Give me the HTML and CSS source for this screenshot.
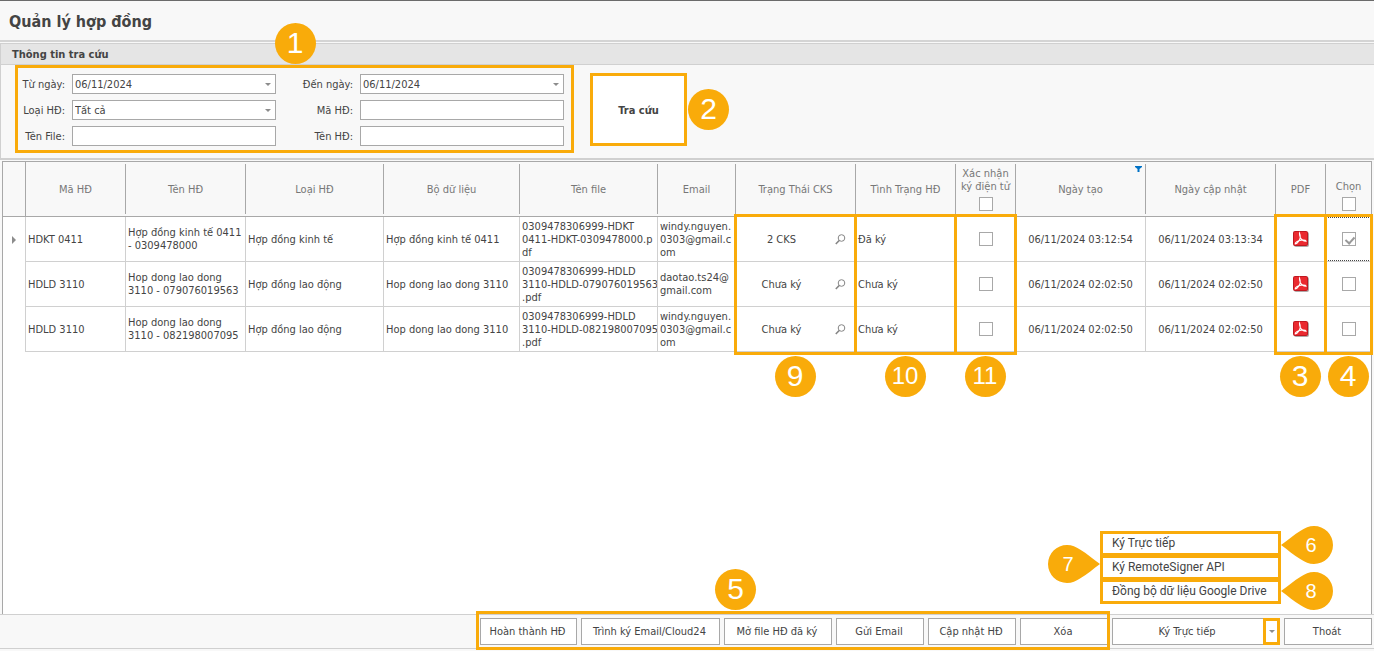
FILE: index.html
```html
<!DOCTYPE html>
<html lang="vi">
<head>
    <meta charset="UTF-8">
    <meta name="viewport" content="width=device-width, initial-scale=1.0">
    <title>Quản lý hợp đồng</title>
    <link rel="stylesheet" href="styles.css">
</head>
<body>
    <svg class="sprite" aria-hidden="true">
        <symbol id="pdf" viewBox="0 0 16 16">
            <rect x="1" y="1" width="15" height="15" rx="2" fill="#b0a8a8"/>
            <rect x="0" y="0" width="15" height="15" rx="2" fill="#c01820"/>
            <rect x="1" y="1" width="13" height="13" rx="1" fill="#ea2a30"/>
            <path d="M6.500 2.200C7.800 5 7.400 8 5.500 10.500 4.500 12 3.200 13 2.200 12.800c.3-1.700 3-3.200 6-3.600 2.500-.3 4.600 0 4.900.9C11 10.200 8.500 8.800 7.300 6.500 6.700 5 6.300 3.500 6.500 2.200z" fill="none" stroke="#fff" stroke-width="1.100"/>
        </symbol>
        <symbol id="lens" viewBox="0 0 11 11">
            <circle cx="6.500" cy="4" r="3.300" fill="none" stroke="#858585" stroke-width="1"/>
            <path d="M4.200 6.500L.8 10" stroke="#858585" stroke-width="1.600"/>
        </symbol>
        <symbol id="drop" viewBox="0 0 52 38">
            <path d="M0 19C7 14 13 8.500 20 4.500 24 2 28 0 33 0a19 19 0 0 1 0 38c-5 0-9-2-13-4.500C13 29.500 7 24 0 19z" fill="#f9ab0a"/>
        </symbol>
    </svg>

    <header class="title-bar">
        <h1>Quản lý hợp đồng</h1>
    </header>

    <section class="search-panel">
        <h2>Thông tin tra cứu</h2>
        <form class="search-body">
            <div class="filters">
                <label for="fromDate">Từ ngày:</label>
                <div class="combo"><select id="fromDate"><option>06/11/2024</option></select></div>
                <label for="toDate">Đến ngày:</label>
                <div class="combo"><select id="toDate"><option>06/11/2024</option></select></div>
                <label for="type">Loại HĐ:</label>
                <div class="combo"><select id="type"><option>Tất cả</option></select></div>
                <label for="code">Mã HĐ:</label>
                <input type="text" id="code">
                <label for="file">Tên File:</label>
                <input type="text" id="file">
                <label for="name">Tên HĐ:</label>
                <input type="text" id="name">
                <span class="badge badge-filters">1</span>
            </div>
            <button type="button" class="search-button">Tra cứu</button>
            <span class="badge">2</span>
        </form>
    </section>

    <main class="grid">
        <table>
            <colgroup>
                <col style="width:22px"><col style="width:100px"><col style="width:120px"><col style="width:138px">
                <col style="width:136px"><col style="width:138px"><col style="width:78px"><col style="width:120px">
                <col style="width:100px"><col style="width:60px"><col style="width:130px"><col style="width:130px">
                <col style="width:50px"><col style="width:46px">
            </colgroup>
            <thead>
                <tr>
                    <th></th>
                    <th>Mã HĐ</th>
                    <th>Tên HĐ</th>
                    <th>Loại HĐ</th>
                    <th>Bộ dữ liệu</th>
                    <th>Tên file</th>
                    <th>Email</th>
                    <th>Trạng Thái CKS</th>
                    <th>Tình Trạng HĐ</th>
                    <th class="with-check"><label for="allSign">Xác nhận<br>ký điện tử</label><input type="checkbox" id="allSign"></th>
                    <th>Ngày tạo
                        <svg class="filter-icon" width="7" height="6" viewBox="0 0 7 6"><path d="M0 0h7v1L4.500 3v3h-2V3L0 1z" fill="#0072c6"/></svg>
                    </th>
                    <th>Ngày cập nhật</th>
                    <th>PDF</th>
                    <th class="with-check"><label for="allPick">Chọn</label><input type="checkbox" id="allPick"></th>
                </tr>
            </thead>
            <tbody>
                <tr>
                    <td><span class="row-arrow"></span></td>
                    <td>HDKT 0411</td>
                    <td>Hợp đồng kinh tế 0411<br>- 0309478000</td>
                    <td>Hợp đồng kinh tế</td>
                    <td>Hợp đồng kinh tế 0411</td>
                    <td>0309478306999-HDKT<br>0411-HDKT-0309478000.p<br>df</td>
                    <td>windy.nguyen.<br>0303@gmail.c<br>om</td>
                    <td><div class="lookup"><span>2 CKS</span><svg width="11" height="11"><use href="#lens"/></svg></div><div class="mark"><span class="badge">9</span></div></td>
                    <td>Đã ký<div class="mark"><span class="badge small">10</span></div></td>
                    <td class="center"><input type="checkbox" aria-label="Xác nhận ký điện tử"><div class="mark"><span class="badge small">11</span></div></td>
                    <td class="center">06/11/2024 03:12:54</td>
                    <td class="center">06/11/2024 03:13:34</td>
                    <td class="center"><svg class="pdf" width="16" height="16"><use href="#pdf"/></svg><div class="mark"><span class="badge">3</span></div></td>
                    <td class="center focused"><input type="checkbox" aria-label="Chọn" checked><div class="mark"><span class="badge">4</span></div></td>
                </tr>
                <tr>
                    <td></td>
                    <td>HDLD 3110</td>
                    <td>Hop dong lao dong<br>3110 - 079076019563</td>
                    <td>Hợp đồng lao động</td>
                    <td>Hop dong lao dong 3110</td>
                    <td>0309478306999-HDLD<br>3110-HDLD-079076019563<br>.pdf</td>
                    <td>daotao.ts24@<br>gmail.com</td>
                    <td><div class="lookup"><span>Chưa ký</span><svg width="11" height="11"><use href="#lens"/></svg></div></td>
                    <td>Chưa ký</td>
                    <td class="center"><input type="checkbox" aria-label="Xác nhận ký điện tử"></td>
                    <td class="center">06/11/2024 02:02:50</td>
                    <td class="center">06/11/2024 02:02:50</td>
                    <td class="center"><svg class="pdf" width="16" height="16"><use href="#pdf"/></svg></td>
                    <td class="center"><input type="checkbox" aria-label="Chọn"></td>
                </tr>
                <tr>
                    <td></td>
                    <td>HDLD 3110</td>
                    <td>Hop dong lao dong<br>3110 - 082198007095</td>
                    <td>Hợp đồng lao động</td>
                    <td>Hop dong lao dong 3110</td>
                    <td>0309478306999-HDLD<br>3110-HDLD-082198007095<br>.pdf</td>
                    <td>windy.nguyen.<br>0303@gmail.c<br>om</td>
                    <td><div class="lookup"><span>Chưa ký</span><svg width="11" height="11"><use href="#lens"/></svg></div></td>
                    <td>Chưa ký</td>
                    <td class="center"><input type="checkbox" aria-label="Xác nhận ký điện tử"></td>
                    <td class="center">06/11/2024 02:02:50</td>
                    <td class="center">06/11/2024 02:02:50</td>
                    <td class="center"><svg class="pdf" width="16" height="16"><use href="#pdf"/></svg></td>
                    <td class="center"><input type="checkbox" aria-label="Chọn"></td>
                </tr>
            </tbody>
        </table>
    </main>

    <footer class="actions">
        <div class="action-group">
            <button type="button" class="w-97">Hoàn thành HĐ</button>
            <button type="button" class="w-139">Trình ký Email/Cloud24</button>
            <button type="button" class="w-108">Mở file HĐ đã ký</button>
            <button type="button">Gửi Email</button>
            <button type="button">Cập nhật HĐ</button>
            <button type="button">Xóa</button>
            <span class="badge badge-actions">5</span>
        </div>
        <div class="split">
            <button type="button" class="split-main">Ký Trực tiếp</button>
            <button type="button" class="split-arrow" aria-label="Chọn cách ký"></button>
            <div class="sign-menu">
                <button type="button">Ký Trực tiếp</button>
                <button type="button">Ký RemoteSigner API</button>
                <button type="button">Đồng bộ dữ liệu Google Drive</button>
                <span class="drop drop-6"><svg width="52" height="38"><use href="#drop"/></svg><b>6</b></span>
                <span class="drop drop-7"><svg width="52" height="38"><use href="#drop"/></svg><b>7</b></span>
                <span class="drop drop-8"><svg width="52" height="38"><use href="#drop"/></svg><b>8</b></span>
            </div>
        </div>
        <button type="button">Thoát</button>
    </footer>
</body>
</html>
```
FILE: styles.css
```css
* {
    box-sizing: border-box;
}
body {
    display: flex;
    flex-direction: column;
    min-height: 100vh;
    margin: 0;
    border-top: 1px solid #6b6b6b;
    background-color: #f8f8f8;
    color: #444;
    font-family: "DejaVu Sans Condensed", Tahoma, sans-serif;
    font-size: 11px;
    line-height: 13px;
}
button, input, select {
    margin: 0;
    font: inherit;
    color: inherit;
}
.sprite {
    position: absolute;
    width: 0;
    height: 0;
}

/* title and search panel */
.title-bar {
    height: 41px;
    padding: 11px 9px 0;
    border-bottom: 2px solid #d4d4d4;
}
h1 {
    margin: 0;
    font-size: 16px;
    line-height: 20px;
}
.search-panel {
    margin-top: 1px;
    border: 1px solid #d0d0d0;
    border-width: 1px 0 2px 1px;
}
h2 {
    margin: 0;
    height: 21px;
    padding: 0 11px;
    border-bottom: 1px solid #d0d0d0;
    background-color: #e5e5e5;
    font-size: 11px;
    line-height: 21px;
}
.search-body {
    display: flex;
    align-items: center;
    height: 93px;
    padding: 0 14px 5px;
}
.filters {
    position: relative;
    display: grid;
    grid-template-columns: 47px 204px 70px 204px;
    gap: 6px 7px;
    padding: 6px 7px 4px 0;
    border: 3px solid #f9ab0a;
}
.filters label {
    display: flex;
    justify-content: flex-end;
    align-items: center;
    white-space: nowrap;
}
.filters input, .combo select {
    display: block;
    width: 100%;
    height: 20px;
    padding: 0 2px;
    border: 1px solid #a8a8a8;
    border-radius: 0;
    background-color: white;
    appearance: none;
}
.combo {
    position: relative;
}
.combo::after {
    content: "";
    position: absolute;
    right: 5px;
    top: 9px;
    border: 3px solid transparent;
    border-top-color: #8c8c8c;
    border-bottom: none;
}
.search-button {
    width: 97px;
    height: 73px;
    margin: 0 1px 0 16px;
    padding: 3px 0 0;
    border: 3px solid #f9ab0a;
    background-color: white;
    font-weight: bold;
}

/* numbered callouts */
.badge {
    width: 41px;
    height: 41px;
    border-radius: 50%;
    background-color: #f9ab0a;
    color: white;
    font-family: "Liberation Sans", Arial, sans-serif;
    font-size: 30px;
    line-height: 40px;
    text-align: center;
}
.badge.small {
    font-size: 24px;
}
.badge-filters {
    position: absolute;
    left: 50%;
    top: -45px;
    margin-left: -20px;
}
.mark {
    position: absolute;
    z-index: 1;
    left: -2px;
    right: -2px;
    top: -3px;
    height: 141px;
    border: 3px solid #f9ab0a;
    pointer-events: none;
}
.mark .badge {
    position: absolute;
    left: 50%;
    top: 139px;
    margin-left: -21px;
}

/* contract grid */
.grid {
    flex: 1;
    margin: 1px 2px 0;
    border: 1px solid #a8a8a8;
    border-bottom: none;
    background-color: white;
}
table {
    width: 100%;
    table-layout: fixed;
    border-spacing: 0;
}
th {
    position: relative;
    height: 55px;
    padding: 0 0 0 1px;
    border-bottom: 1px solid #a8a8a8;
    background-color: #f8f8f8;
    color: #777;
    font-weight: normal;
}
th + th::before {
    content: "";
    position: absolute;
    left: 0;
    top: 2px;
    bottom: 2px;
    border-left: 1px solid #a8a8a8;
}
th:nth-child(2)::before {
    top: 0;
    bottom: 0;
}
.with-check {
    padding-bottom: 5px;
    vertical-align: bottom;
}
.with-check input {
    margin: 4px auto 0;
}
.filter-icon {
    position: absolute;
    right: 3px;
    top: 4px;
}
td {
    position: relative;
    height: 45px;
    padding: 0 0 0 2px;
    border-left: 1px solid #d0d0d0;
    border-bottom: 1px solid #d0d0d0;
    white-space: nowrap;
}
td:first-child {
    padding: 0;
    border: none;
}
td.center {
    padding: 0;
    text-align: center;
}
.focused::before {
    content: "";
    position: absolute;
    inset: 0;
    border: 1px dotted #444;
}
.row-arrow {
    display: block;
    width: 4px;
    margin-left: 9px;
    border: 4px solid transparent;
    border-left-color: #8c8c8c;
    border-right: none;
}
.lookup {
    display: flex;
    align-items: center;
    padding-right: 9px;
}
.lookup span {
    flex: 1;
    padding-right: 10px;
    text-align: center;
}
.pdf {
    display: block;
    margin: 0 auto;
}
input[type="checkbox"] {
    display: block;
    position: relative;
    width: 14px;
    height: 14px;
    margin-left: auto;
    margin-right: auto;
    border: 1px solid #a8a8a8;
    background-color: white;
    appearance: none;
}
input[type="checkbox"]:checked::after {
    content: "";
    position: absolute;
    left: 4px;
    top: 2px;
    width: 4px;
    height: 7px;
    border: solid #999;
    border-width: 0 2px 2px 0;
    transform: rotate(42deg);
}

/* bottom buttons */
.actions {
    display: flex;
    justify-content: flex-end;
    gap: 4px;
    margin-bottom: 2px;
    padding: 3px 2px;
    border-top: 1px solid #d0d0d0;
    border-bottom: 1px solid #d0d0d0;
}
.actions button {
    width: 88px;
    height: 27px;
    padding: 0 2px 0 0;
    border: 1px solid #a8a8a8;
    background-color: white;
    white-space: nowrap;
}
.action-group {
    position: relative;
    display: flex;
    gap: 4px;
}
.action-group::before {
    content: "";
    position: absolute;
    inset: -7px -2px -5px -4px;
    border: 3px solid #f9ab0a;
    pointer-events: none;
}
.actions .w-97 {
    width: 97px;
}
.actions .w-139 {
    width: 139px;
}
.actions .w-108 {
    width: 108px;
}
.badge-actions {
    position: absolute;
    left: 235px;
    top: -49px;
}
.split {
    position: relative;
    display: flex;
}
.actions .split-main {
    width: 151px;
    border-right: none;
}
.actions .split-arrow {
    display: flex;
    align-items: center;
    justify-content: center;
    width: 17px;
    padding: 0;
    border: 3px solid #f9ab0a;
}
.split-arrow::before {
    content: "";
    border: 3px solid transparent;
    border-top-color: #8c8c8c;
    border-bottom: none;
}
.sign-menu {
    position: absolute;
    right: -1px;
    bottom: 41px;
    display: flex;
    flex-direction: column;
    width: 181px;
}
.actions .sign-menu button {
    width: 100%;
    height: 25px;
    padding: 0 0 0 9px;
    border: 3px solid #f9ab0a;
    font-family: Roboto, "Segoe UI", sans-serif;
    font-size: 12px;
    text-align: left;
}
.sign-menu button + button {
    margin-top: -1px;
}
.drop {
    position: absolute;
    width: 52px;
    height: 38px;
}
.drop svg {
    display: block;
}
.drop b {
    position: absolute;
    inset: 0 0 0 8px;
    color: white;
    font-family: "Liberation Sans", Arial, sans-serif;
    font-size: 20px;
    font-weight: normal;
    line-height: 38px;
    text-align: center;
}
.drop-6, .drop-8 {
    left: 100%;
}
.drop-6 {
    top: -5px;
}
.drop-7 {
    right: 100%;
    top: 14px;
}
.drop-8 {
    bottom: -6px;
}
.drop-7 svg {
    transform: scaleX(-1);
}
.drop-7 b {
    inset: 0 12px 0 0;
}
```
